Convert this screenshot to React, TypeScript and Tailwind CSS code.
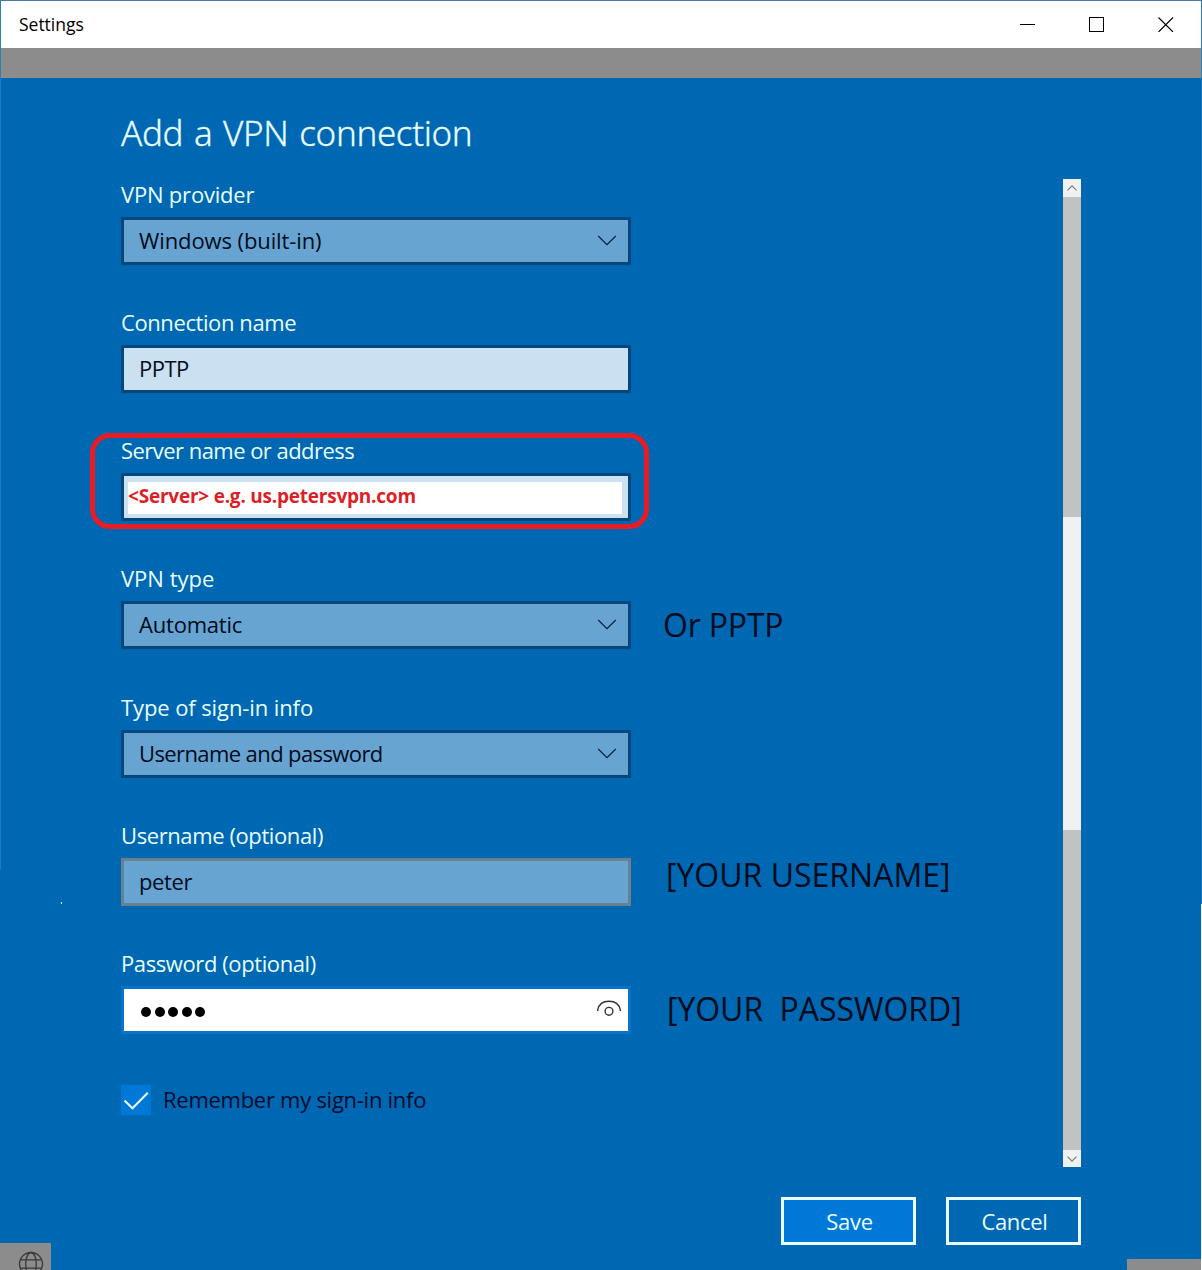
import type { ReactNode } from "react";

function ChevronDown() {
  return (
    <svg className="mr-[11px] mb-px h-[11px] w-[20px]" viewBox="0 0 20 11" fill="none" stroke="#05233f" strokeWidth="1.2">
      <path d="M1.2 1 10 9.6 18.8 1" />
    </svg>
  );
}

function EyeIcon() {
  return (
    <svg className="mr-[6px] mb-[4px] h-[18px] w-[26px]" viewBox="0 0 26 18" fill="none" stroke="#333" strokeWidth="1.4">
      <path d="M1.7 12V10.800C2.900 5.200 7.400 2.200 13 2.200S23.100 5.200 24.300 10.800V12" />
      <circle cx="13" cy="12.300" r="3.9" />
    </svg>
  );
}

type FieldProps = {
  label: string;
  labelClass: string;
  boxClass: string;
  children: ReactNode;
  note?: ReactNode;
};

function Field({ label, labelClass, boxClass, children, note }: FieldProps) {
  return (
    <div className="flex h-[88px] flex-col">
      <div className={`h-10 text-[22px] leading-[35px] whitespace-nowrap text-[#e6ffff] ${labelClass}`}>{label}</div>
      <div className="flex h-12 items-center">
        <div className={`flex h-12 w-[510px] shrink-0 items-center justify-between border-[3px] ${boxClass}`}>{children}</div>
        {note}
      </div>
    </div>
  );
}

const value = "pb-[2px] pl-[15px] text-[22px] leading-[40px] whitespace-nowrap text-[#000b1c]";
const note = "shrink-0 text-[32px] leading-[48px] whitespace-pre text-[#000b1c]";
const selectBox = "border-[#04477d] bg-[#67a4d1]";

export default function App() {
  return (
    <div className="relative flex h-[1270px] w-[1202px] flex-col overflow-hidden bg-[#0067b3] font-['Open_Sans','Noto_Sans',sans-serif]">
      <header className="flex h-12 shrink-0 items-center border-x border-t border-x-[#2b7fbd] border-t-[#47799c] bg-white pr-[26px] pl-[18px]">
        <span className="grow pb-[2px] text-[17.5px] leading-[46px] tracking-[-0.02px] text-black">Settings</span>
        <svg className="mb-[2px] h-4 w-[155px]" viewBox="0 0 155 16" fill="none" stroke="#000">
          <path d="M0 8.500H15" />
          <rect x="69.500" y="1.500" width="14" height="14" />
          <path d="M138.500 1.500 153 16M153 1.500 138.500 16" strokeWidth="1.100" />
        </svg>
      </header>
      <div className="h-[30px] shrink-0 border-x border-[#2b7fbd] bg-[#8c8c8c]" />

      <main className="flex h-[1089px] shrink-0 justify-between pr-[121px] pl-[121px]">
        <section className="flex w-[900px] flex-col">
          <h1 className="h-[99px] pt-[31px] font-['Noto_Sans'] text-[35px] leading-[48px] font-light tracking-[-0.35px] whitespace-nowrap text-[#e6ffff] [-webkit-text-stroke:0.3px_#e6ffff] [word-spacing:2px]">
            Add a VPN connection
          </h1>
          <div className="flex flex-col gap-10">
            <Field label="VPN provider" labelClass="tracking-[-0.2px]" boxClass={selectBox}>
              <span className={`${value} tracking-[-0.1px]`}>Windows (built-in)</span>
              <ChevronDown />
            </Field>
            <Field label="Connection name" labelClass="tracking-[-0.41px]" boxClass="border-[#04477d] bg-[#cbe1f1]">
              <span className={`${value} tracking-[-0.5px]`}>PPTP</span>
            </Field>
            <Field label="Server name or address" labelClass="tracking-[-0.54px]" boxClass="border-[#04477d] bg-[#cbe1f1]">
              <div className="mt-[2px] mr-[6px] ml-1 h-8 grow bg-white text-[19px] leading-[29px] font-bold tracking-[-0.22px] whitespace-nowrap text-[#dc1f26]">
                &lt;Server&gt; e.g. us.petersvpn.com
              </div>
            </Field>
            <Field
              label="VPN type"
              labelClass=""
              boxClass={selectBox}
              note={<span className={`${note} ml-[32px] tracking-[-0.2px]`}>Or PPTP</span>}
            >
              <span className={`${value} tracking-[-0.2px]`}>Automatic</span>
              <ChevronDown />
            </Field>
            <div className="mt-px">
              <Field label="Type of sign-in info" labelClass="tracking-[-0.1px]" boxClass={selectBox}>
                <span className={`${value} tracking-[-0.6px]`}>Username and password</span>
                <ChevronDown />
              </Field>
            </div>
            <Field
              label="Username (optional)"
              labelClass="tracking-[-0.4px]"
              boxClass="border-[#68808f] bg-[#67a4d1]"
              note={<span className={`${note} mb-[14px] ml-[35px]`}>[YOUR USERNAME]</span>}
            >
              <span className={`${value} tracking-[-0.4px]`}>peter</span>
            </Field>
            <Field
              label="Password (optional)"
              labelClass="tracking-[-0.4px]"
              boxClass="border-[#0a72cc] bg-white"
              note={<span className={`${note} mb-[2px] ml-[36px] tracking-[-0.05px]`}>{"[YOUR  PASSWORD]"}</span>}
            >
              <div className="mt-[3px] flex gap-[3.500px] pl-[17px]">
                {[0, 1, 2, 3, 4].map((i) => (
                  <i key={i} className="h-[10px] w-[10px] rounded-full bg-black" />
                ))}
              </div>
              <EyeIcon />
            </Field>
          </div>
          <div className="mt-[51px] flex h-[30px] items-center gap-3">
            <div className="flex size-[30px] items-center justify-center bg-[#0078d7]">
              <svg className="size-[30px]" viewBox="0 0 30 30" fill="none" stroke="#f0ffff" strokeWidth="2">
                <path d="M3.500 15.500 11.500 23.300 26.800 7.800" />
              </svg>
            </div>
            <span className="pb-[2px] text-[22px] leading-[28px] tracking-[-0.27px] whitespace-nowrap text-[#000b2c]">
              Remember my sign-in info
            </span>
          </div>
        </section>

        <div className="mt-[101px] flex h-[988px] w-[18px] flex-col bg-[#c2c2c2]">
          <div className="flex h-[18px] items-center justify-center bg-[#f0f2f2]">
            <svg className="h-[6px] w-[10px]" viewBox="0 0 10 6" fill="none" stroke="#777" strokeWidth="1.100">
              <path d="M.5 5.300 5 .8 9.500 5.300" />
            </svg>
          </div>
          <div className="mt-80 h-[313px] bg-[#f0f2f2]" />
          <div className="mt-auto flex h-[17px] items-center justify-center bg-[#f0f2f2]">
            <svg className="mt-px h-[6px] w-[10px]" viewBox="0 0 10 6" fill="none" stroke="#777" strokeWidth="1.100">
              <path d="M.5 .7 5 5.200 9.500 .7" />
            </svg>
          </div>
        </div>
      </main>

      <footer className="flex gap-[30px] pt-[30px] pl-[781px] text-[22px] leading-[43px] text-[#e6ffff]">
        <button className="h-12 w-[135px] border-[3px] border-[#eaffff] bg-[#0078d7] pl-[2px] tracking-[-0.3px]">Save</button>
        <button className="h-12 w-[135px] border-[3px] border-[#eaffff] pl-[2px] tracking-[-0.3px]">Cancel</button>
      </footer>

      {/* Highlight drawn over the server field */}
      <div className="absolute top-[433px] left-[90px] h-[96px] w-[559px] rounded-[20px] border-[5px] border-[#e81c24]" />

      {/* Window edges and the parts of the page behind the dialog */}
      <div className="absolute top-[78px] left-0 h-[792px] w-px bg-[#1f79bd]" />
      <div className="absolute top-[78px] right-0 h-[826px] w-px bg-[#1f79bd]" />
      <div className="absolute top-[904px] right-0 h-[366px] w-px bg-white" />
      <div className="absolute top-[902px] left-[61px] h-[2px] w-px bg-[#e6ffff]" />
      <div className="absolute right-px bottom-0 h-[11px] w-[74px] bg-[#8c8c8c]" />
      <div className="absolute bottom-0 left-0 h-[27px] w-[51px] overflow-hidden bg-[#8c8c8c]">
        <svg className="mt-[8px] ml-[18px] h-[26px] w-[26px]" viewBox="0 0 26 26" fill="none" stroke="#383838" strokeWidth="1.300">
          <circle cx="13" cy="13" r="11.500" />
          <ellipse cx="13" cy="13" rx="5.300" ry="11.500" />
          <path d="M2.500 8.800H23.500M2.500 17.200H23.500" />
        </svg>
      </div>
    </div>
  );
}
